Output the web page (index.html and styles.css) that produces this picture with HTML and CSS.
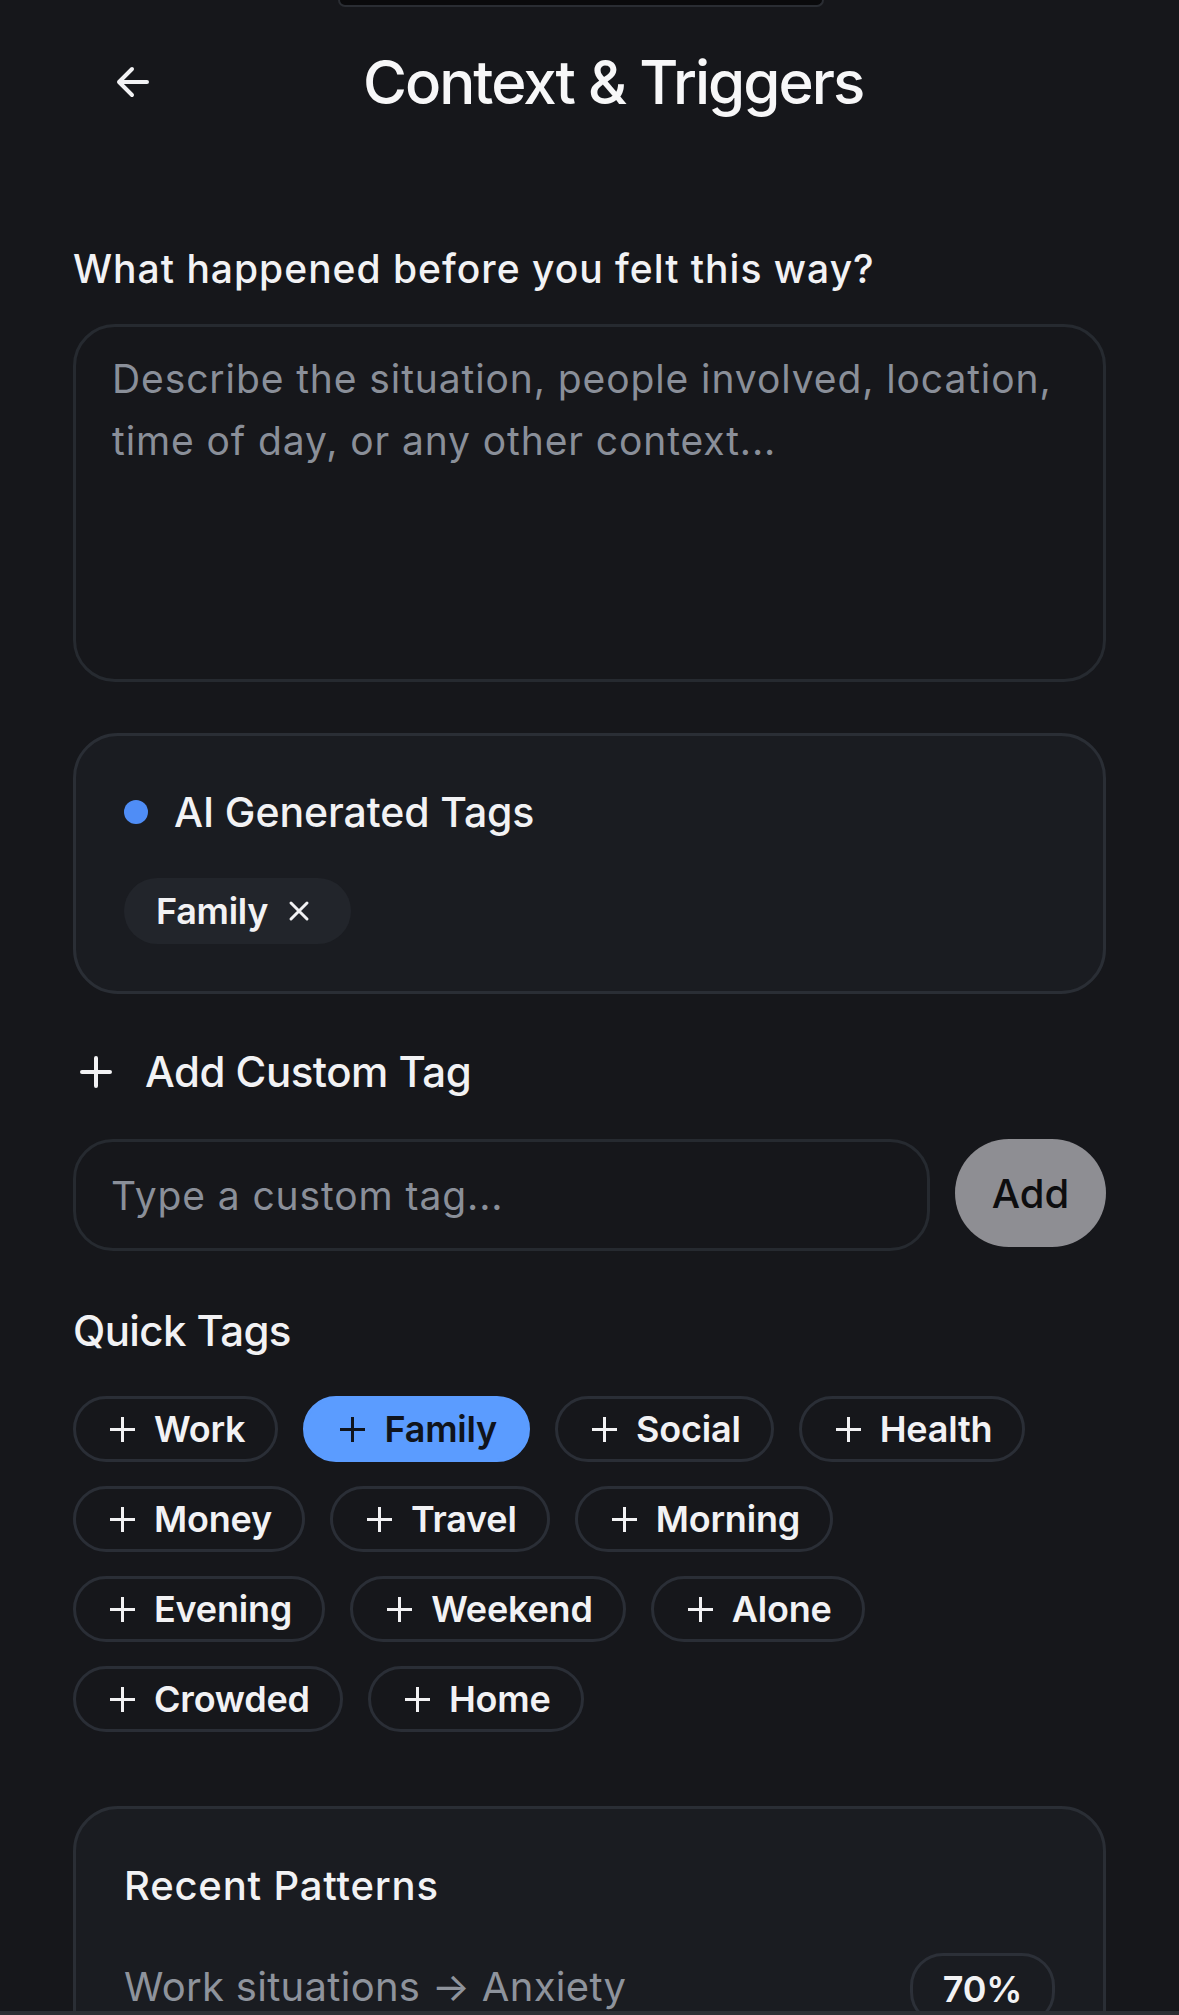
FILE: index.html
```html
<!DOCTYPE html>
<html>
  <head>
    <title>Context &amp; Triggers</title>
    <link rel="stylesheet" href="styles.css">
  </head>
  <body>
    <div class="notch"></div>

    <div class="page">
      <div class="header">
        <button class="back-btn" aria-label="Back">
          <svg width="33" height="32" viewBox="0 0 33 32">
            <path d="M31 16H3M16 3L3 16l13 13" fill="none" stroke="#f2f2f4" stroke-width="4" stroke-linecap="round" stroke-linejoin="round" />
          </svg>
        </button>
        <h1>Context &amp; Triggers</h1>
      </div>

      <label class="question" for="context">What happened before you felt this way?</label>
      <textarea id="context" class="context-input" placeholder="Describe the situation, people involved, location,&#10;time of day, or any other context..."></textarea>

      <div class="card ai-card">
        <div class="card-title">
          <span class="dot"></span>
          <span>AI Generated Tags</span>
        </div>
        <div class="ai-tags">
          <span class="ai-tag">
            Family
            <svg width="22" height="22" viewBox="0 0 22 22">
              <path d="M3 3l16 16M19 3L3 19" fill="none" stroke="#f2f2f4" stroke-width="3" stroke-linecap="round" />
            </svg>
          </span>
        </div>
      </div>

      <div class="custom-head">
        <svg width="32" height="32" viewBox="0 0 32 32">
          <path d="M16 2v28M2 16h28" fill="none" stroke="#f2f2f4" stroke-width="4" stroke-linecap="round" />
        </svg>
        <span>Add Custom Tag</span>
      </div>

      <div class="custom-row">
        <input type="text" class="custom-input" placeholder="Type a custom tag..." />
        <button class="add-btn">Add</button>
      </div>

      <h2 class="section-title">Quick Tags</h2>
      <div class="quick-tags">
        <button class="chip">Work</button>
        <button class="chip active">Family</button>
        <button class="chip">Social</button>
        <button class="chip">Health</button>
        <button class="chip">Money</button>
        <button class="chip">Travel</button>
        <button class="chip">Morning</button>
        <button class="chip">Evening</button>
        <button class="chip">Weekend</button>
        <button class="chip">Alone</button>
        <button class="chip">Crowded</button>
        <button class="chip">Home</button>
      </div>

      <div class="card patterns-card">
        <div class="patterns-title">Recent Patterns</div>
        <div class="pattern-row">
          <span class="pattern-text">Work situations → Anxiety</span>
          <span class="pattern-pill">70%</span>
        </div>
        <div class="pattern-row">
          <span class="pattern-text">Family → Frustration</span>
          <span class="pattern-pill">55%</span>
        </div>
      </div>
    </div>

    <div class="bottom-bar"></div>
  </body>
</html>
```

FILE: styles.css
```css
body,
h1,
h2,
button,
input,
textarea,
label {
  margin: 0;
  padding: 0;
  box-sizing: border-box;
  font-family: "Inter", "Noto Sans", sans-serif;
}

body {
  background: #16171b;
  color: #f2f2f4;
  min-height: 2015px;
}

.notch {
  position: absolute;
  top: 0;
  left: 338px;
  width: 482px;
  height: 5px;
  background: #0a0a0c;
  border: 2px solid #2a2d33;
  border-top: 0;
  border-radius: 0 0 30px 30px;
}

.page {
  padding: 0 73px 120px;
}

/* Header */
.header {
  display: flex;
  align-items: center;
  height: 72px;
  margin-top: 46px;
  padding-left: 43px;
}

.back-btn {
  background: none;
  border: 0;
  display: flex;
  cursor: pointer;
}

h1 {
  margin-left: 214px;
  font-size: 60px;
  line-height: 72px;
  font-weight: 500;
  letter-spacing: -2px;
  color: #f7f7f8;
}

/* Context input */
.question {
  display: block;
  margin-top: 125px;
  font-size: 39px;
  line-height: 52px;
  font-weight: 500;
  letter-spacing: 1px;
}

.context-input {
  display: block;
  width: 100%;
  height: 358px;
  margin-top: 29px;
  padding: 21px 36px;
  background: #16171b;
  border: 3px solid #262a30;
  border-radius: 42px;
  color: #f2f2f4;
  font-size: 39px;
  line-height: 62px;
  letter-spacing: 0.9px;
  resize: none;
  outline: none;
}

.context-input::placeholder,
.custom-input::placeholder {
  color: #8a8f99;
}

/* Cards */
.card {
  background: #1a1c21;
  border: 3px solid #2a2e35;
  border-radius: 45px;
}

.ai-card {
  margin-top: 51px;
  padding: 50px 48px 47px;
}

.card-title {
  display: flex;
  align-items: center;
  gap: 26px;
  font-size: 41px;
  line-height: 52px;
  font-weight: 500;
  letter-spacing: -0.1px;
}

.dot {
  width: 24px;
  height: 24px;
  border-radius: 50%;
  background: #4f8df6;
}

.ai-tags {
  display: flex;
  margin-top: 40px;
}

.ai-tag {
  display: flex;
  align-items: center;
  gap: 20px;
  height: 66px;
  padding: 0 41px 0 32px;
  background: #22252b;
  border-radius: 33px;
  font-size: 36px;
  font-weight: 600;
  letter-spacing: -0.3px;
}

/* Custom tag */
.custom-head {
  display: flex;
  align-items: center;
  gap: 33px;
  margin-top: 51px;
  padding-left: 7px;
  font-size: 42px;
  line-height: 54px;
  font-weight: 500;
  letter-spacing: -0.5px;
}

.custom-row {
  display: flex;
  align-items: flex-start;
  gap: 25px;
  margin-top: 40px;
}

.custom-input {
  flex: 1;
  height: 112px;
  padding: 0 35px;
  background: #16171b;
  border: 3px solid #262a30;
  border-radius: 40px;
  color: #f2f2f4;
  font-size: 39px;
  letter-spacing: 0.9px;
  outline: none;
}

.add-btn {
  width: 151px;
  height: 108px;
  border: 0;
  border-radius: 54px;
  background: #8e8e93;
  color: #0d0d0f;
  font-size: 40px;
  font-weight: 500;
  cursor: pointer;
}

/* Quick tags */
.section-title {
  margin-top: 53px;
  font-size: 42px;
  line-height: 54px;
  font-weight: 500;
  letter-spacing: -0.6px;
}

.quick-tags {
  display: flex;
  flex-wrap: wrap;
  gap: 24px 25px;
  margin-top: 38px;
}

.chip {
  display: flex;
  align-items: center;
  gap: 19px;
  height: 66px;
  padding: 0 30px 0 34px;
  background: #16171b;
  border: 3px solid #2a2e36;
  border-radius: 33px;
  color: #f2f2f4;
  font-size: 36px;
  font-weight: 600;
  letter-spacing: -0.2px;
  cursor: pointer;
}

.chip::before {
  content: "";
  width: 25px;
  height: 25px;
  background:
    linear-gradient(currentColor, currentColor) center / 100% 3px no-repeat,
    linear-gradient(currentColor, currentColor) center / 3px 100% no-repeat;
}

.chip.active {
  background: #5b9cff;
  border-color: #5b9cff;
  color: #10141c;
}

/* Recent patterns */
.patterns-card {
  margin-top: 74px;
  padding: 51px 48px;
}

.patterns-title {
  font-size: 40px;
  line-height: 52px;
  font-weight: 500;
  letter-spacing: 0.8px;
}

.pattern-row {
  display: flex;
  align-items: center;
  justify-content: space-between;
  margin-top: 41px;
}

.pattern-text {
  padding-bottom: 5px;
  font-size: 40px;
  line-height: 52px;
  color: #8e939c;
  letter-spacing: 0.3px;
}

.pattern-pill {
  display: flex;
  align-items: center;
  height: 66px;
  padding: 0 30px;
  border: 3px solid #2c3038;
  border-radius: 33px;
  font-size: 36px;
  font-weight: 600;
  letter-spacing: -0.3px;
}

.bottom-bar {
  position: fixed;
  left: 0;
  right: 0;
  bottom: 0;
  height: 4px;
  background: #2c2e33;
}
```
